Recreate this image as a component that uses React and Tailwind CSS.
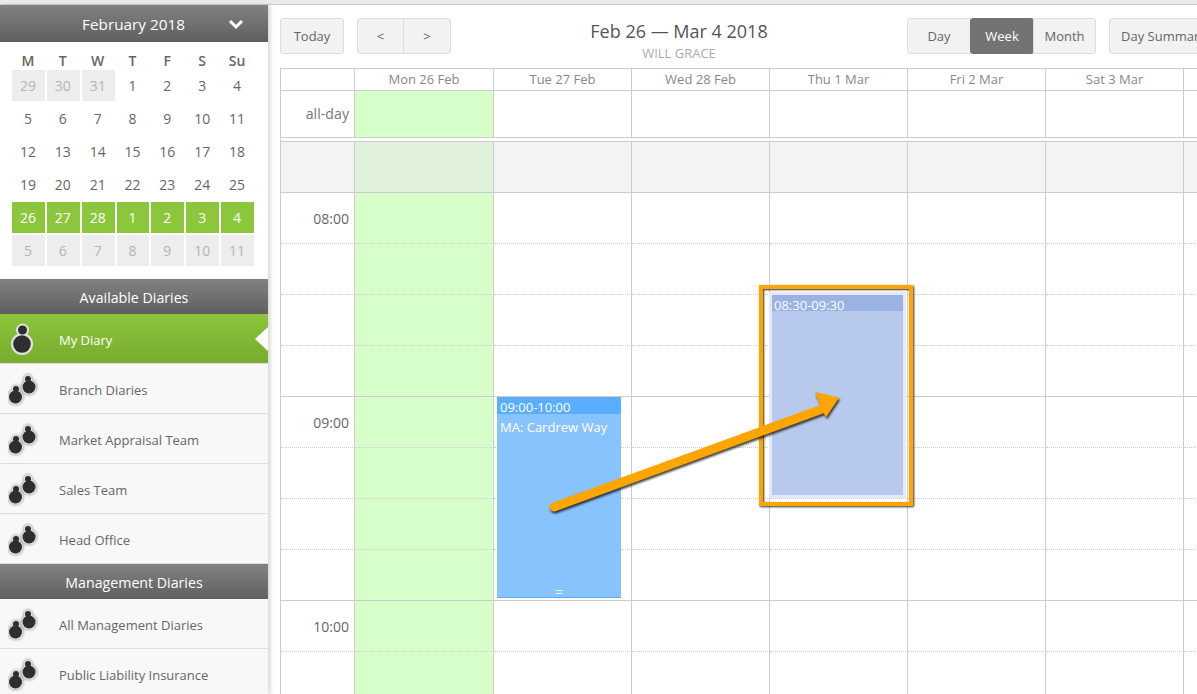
import React from "react";

const days = ["Mon 26 Feb", "Tue 27 Feb", "Wed 28 Feb", "Thu 1 Mar", "Fri 2 Mar", "Sat 3 Mar", ""];
const cols = "grid grid-cols-[74px_139px_138px_138px_138px_138px_138px_60px] w-[1000px]";

function Person() {
  return (
    <svg width="32" height="36" viewBox="0 0 32 36" className="shrink-0">
      <defs>
        <filter id="halo1" x="-30%" y="-30%" width="160%" height="160%">
          <feGaussianBlur stdDeviation="0.7" />
        </filter>
        <filter id="soft1" x="-20%" y="-20%" width="140%" height="140%">
          <feGaussianBlur stdDeviation="0.35" />
        </filter>
      </defs>
      <g fill="#e2e2e2" filter="url(#halo1)">
        <circle cx="14.5" cy="9" r="6.5" />
        <circle cx="14" cy="23" r="11" />
      </g>
      <g fill="#2e2e2e" filter="url(#soft1)">
        <circle cx="14.5" cy="9" r="4.5" />
        <circle cx="14" cy="23" r="8.8" />
      </g>
    </svg>
  );
}

function Group() {
  return (
    <svg width="32" height="36" viewBox="0 0 32 36" className="shrink-0">
      <defs>
        <filter id="halo2" x="-30%" y="-30%" width="160%" height="160%">
          <feGaussianBlur stdDeviation="1.1" />
        </filter>
        <filter id="soft2" x="-20%" y="-20%" width="140%" height="140%">
          <feGaussianBlur stdDeviation="0.4" />
        </filter>
      </defs>
      <g fill="#b4b4b4" filter="url(#halo2)">
        <circle cx="20" cy="8" r="5" />
        <circle cx="21" cy="16" r="8.5" />
        <circle cx="8" cy="18" r="4.5" />
        <circle cx="7.5" cy="26" r="8.5" />
      </g>
      <g fill="#ffffff" opacity="0.55" filter="url(#soft2)">
        <circle cx="20" cy="8" r="4" />
        <circle cx="21" cy="16" r="7.5" />
        <circle cx="8" cy="18" r="3.8" />
        <circle cx="7.5" cy="26" r="7.5" />
      </g>
      <g fill="#2e2e2e" filter="url(#soft2)">
        <circle cx="20" cy="8" r="3" />
        <circle cx="21" cy="16" r="6.5" />
        <circle cx="8" cy="18" r="3" />
        <circle cx="7.5" cy="26" r="6.5" />
      </g>
    </svg>
  );
}

function Bar({ children, className = "" }) {
  return (
    <div className={`h-[35px] shrink-0 pt-[2px] flex items-center justify-center bg-gradient-to-b from-[#828282] to-[#5f5f5f] text-white text-[14.2px] ${className}`}>
      {children}
    </div>
  );
}

function Item({ label }) {
  return (
    <div className="h-[50px] shrink-0 pl-[8px] flex items-center gap-[19px] bg-[#f8f8f8] border-b border-[#dddddd] text-[#666] text-[13px]">
      <Group />
      <span className="pt-[4px]">{label}</span>
    </div>
  );
}

function DayCell({ n, kind }) {
  const k =
    kind === "g"
      ? "bg-[#ededed] text-[#b4b4b4]"
      : kind === "a"
      ? "bg-[#8cc63c] text-white"
      : "text-[#666]";
  return <div className={`h-[31px] pr-[1px] flex items-center justify-center text-[14px] ${k}`}>{n}</div>;
}

function Sidebar() {
  const rows = [
    [[29, "g"], [30, "g"], [31, "g"], [1], [2], [3], [4]],
    [[5], [6], [7], [8], [9], [10], [11]],
    [[12], [13], [14], [15], [16], [17], [18]],
    [[19], [20], [21], [22], [23], [24], [25]],
    [[26, "a"], [27, "a"], [28, "a"], [1, "a"], [2, "a"], [3, "a"], [4, "a"]],
    [[5, "g"], [6, "g"], [7, "g"], [8, "g"], [9, "g"], [10, "g"], [11, "g"]],
  ];
  return (
    <aside className="w-[268px] shrink-0 h-full bg-white shadow-[3px_0_3px_rgba(0,0,0,0.13)] flex flex-col overflow-hidden">
      <Bar className="!h-[37px] relative !text-[15.3px] pr-[1px]">
        February 2018
        <svg width="16" height="11" viewBox="0 0 16 11" className="absolute left-[228px] top-[14px]">
          <path d="M2 2 L8 8 L14 2" fill="none" stroke="#fff" strokeWidth="3" />
        </svg>
      </Bar>
      <div className="shrink-0 h-[237px] pl-[12px] pr-[14px] bg-white">
        <div className="grid grid-cols-7 gap-x-[2px] h-[28px] items-end leading-[18px] text-[14px] font-semibold text-[#666] text-center">
          {["M", "T", "W", "T", "F", "S", "Su"].map((d, i) => (
            <div key={i} className="pr-[1px]">{d}</div>
          ))}
        </div>
        <div className="grid grid-cols-7 gap-x-[2px] gap-y-[2px]">
          {rows.flat().map(([n, k], i) => (
            <DayCell key={i} n={n} kind={k} />
          ))}
        </div>
      </div>
      <Bar>Available Diaries</Bar>
      <div className="shrink-0 h-[50px] pl-[8px] flex items-center gap-[19px] bg-gradient-to-b from-[#8cc63c] to-[#78ab2e] border-b border-[#dddddd] text-white text-[13px] relative">
        <Person />
        <span className="pt-[4px]">My Diary</span>
        <div className="absolute right-0 top-[13px] border-y-[12px] border-y-transparent border-r-[13px] border-r-white" />
      </div>
      <Item label="Branch Diaries" />
      <Item label="Market Appraisal Team" />
      <Item label="Sales Team" />
      <Item label="Head Office" />
      <Bar>Management Diaries</Bar>
      <Item label="All Management Diaries" />
      <Item label="Public Liability Insurance" />
    </aside>
  );
}

function Btn({ children, className = "" }) {
  return (
    <div className={`h-[36px] pt-[1px] flex items-center justify-center bg-[#f2f2f2] border border-[#dcdcdc] text-[#666] text-[13px] ${className}`}>
      {children}
    </div>
  );
}

function Toolbar() {
  return (
    <div className="h-[63px] shrink-0 pt-[13px] flex items-start w-[1000px] relative">
      <Btn className="w-[64px] rounded-[3px]">Today</Btn>
      <div className="flex ml-[13px]">
        <Btn className="w-[47px] rounded-l-[3px]">&lt;</Btn>
        <Btn className="w-[48px] -ml-px rounded-r-[3px]">&gt;</Btn>
      </div>
      <div className="w-[456px] text-center -mt-[1px]">
        <div className="text-[#555] text-[18px] leading-[28px]">Feb 26 — Mar 4 2018</div>
        <div className="text-[#aaaaaa] text-[13px] leading-[16px]">WILL GRACE</div>
      </div>
      <div className="flex">
        <Btn className="w-[64px] rounded-l-[3px]">Day</Btn>
        <Btn className="w-[64px] -ml-px !bg-[#737373] !border-[#737373] !text-white rounded-[3px]">Week</Btn>
        <Btn className="w-[63px] -ml-px rounded-r-[3px]">Month</Btn>
      </div>
      <Btn className="w-[120px] ml-[13px] rounded-[3px] justify-start pl-[11px] whitespace-nowrap">Day Summary</Btn>
    </div>
  );
}

function Cell({ className = "", children }) {
  return <div className={`border-r border-[#cccccc] ${className}`}>{children}</div>;
}

function Slot({ solid, className = "", children }) {
  return (
    <div className={`h-[51px] border-r border-[#cccccc] border-b ${solid ? "border-b-[#cccccc]" : "border-b-[#cccccc] [border-bottom-style:dotted]"} ${className}`}>
      {children}
    </div>
  );
}

function Grid() {
  const n = [0, 1, 2, 3, 4, 5, 6, 7, 8, 9];
  const colsBody = [0, 1, 2, 3, 4, 5, 6];
  return (
    <div className="border-l border-t border-[#cccccc] relative w-[1000px]">
      <div className={cols + " h-[22px] border-b border-[#cccccc]"}>
        <Cell />
        {days.map((d, i) => (
          <Cell key={i} className="flex items-center justify-center text-[13px] text-[#888]">{d}</Cell>
        ))}
      </div>
      <div className={cols + " h-[47px] border-b border-[#cccccc]"}>
        <Cell className="flex items-center justify-end pr-[5px] text-[14.2px] text-[#777]">all-day</Cell>
        {colsBody.map((i) => (
          <Cell key={i} className={i === 0 ? "bg-[#d7ffca]" : ""} />
        ))}
      </div>
      <div className="h-[4px] border-b border-[#cccccc] w-[1000px]" />
      <div className={cols + " h-[51px] border-b border-[#cccccc] bg-[#f3f3f3]"}>
        <Cell />
        {colsBody.map((i) => (
          <Cell key={i} className={i === 0 ? "bg-[#e1f2dc]" : ""} />
        ))}
      </div>
      <div className={cols}>
        <div>
          {n.map((r) => (
            <Slot key={r} solid={r === 3 || r === 7} className={r % 4 === 0 ? "flex justify-end items-start pr-[5px] pt-[15px] text-[14px] text-[#666]" : ""}>
              {r % 4 === 0 ? ["08:00", "", "", "", "09:00", "", "", "", "10:00"][r] : null}
            </Slot>
          ))}
        </div>
        {colsBody.map((c) => (
          <div key={c}>
            {n.map((r) => (
              <Slot key={r} solid={r === 3 || r === 7} className={c === 0 ? "bg-[#d7ffca]" : ""} />
            ))}
          </div>
        ))}
      </div>

      {/* events over the grid */}
      <div className="absolute left-[216px] top-[328px] w-[124px] h-[201px] bg-[#87c3fd] border-b border-[#5aaeff] text-white text-[13px]">
        <div className="h-[17px] bg-[#5aaeff] pl-[3px] leading-[20px]">09:00-10:00</div>
        <div className="pl-[3px] pt-[3px] leading-[20px] whitespace-nowrap">MA: Cardrew Way</div>
        <div className="absolute bottom-0 left-0 right-0 text-center text-[13px] leading-[10px]">=</div>
      </div>
      <div className="absolute left-[491px] top-[226px] w-[131px] h-[200px] bg-[#b7c9ec] text-white text-[13px] outline-[3px] outline-[#e4e9f5]">
        <div className="h-[16px] bg-[#9ab2e4] pl-[2px] leading-[20px]">08:30-09:30</div>
      </div>
      <div className="absolute left-[478px] top-[216px] w-[154px] h-[221px] border-[4px] border-[#ffa500] shadow-[1px_1px_2px_rgba(0,0,0,0.8),inset_1px_1px_2px_rgba(0,0,0,0.8)]" />
      <svg className="absolute left-[260px] top-[320px] overflow-visible" width="300" height="120" viewBox="0 0 300 120" style={{ filter: "drop-shadow(1px 2px 1px rgba(0,0,0,0.75))" }}>
        <path d="M13 118 L284 19" stroke="#ffa500" strokeWidth="9" strokeLinecap="round" fill="none" />
        <path d="M297 9 L275 4 L285 27 Z" fill="#ffa500" stroke="#ffa500" strokeWidth="1.5" strokeLinejoin="round" />
      </svg>
    </div>
  );
}

export default function App() {
  return (
    <div className="w-[1197px] h-[694px] overflow-hidden bg-white flex flex-col" style={{ fontFamily: '"Open Sans", "Noto Sans", sans-serif' }}>
      <div className="h-[5px] shrink-0 bg-[#e9e9e9] border-b border-[#cfcfcf]" />
      <div className="flex flex-1 min-h-0">
        <Sidebar />
        <main className="flex-1 pl-[12px] min-w-0 overflow-hidden flex flex-col">
          <Toolbar />
          <Grid />
        </main>
      </div>
    </div>
  );
}
